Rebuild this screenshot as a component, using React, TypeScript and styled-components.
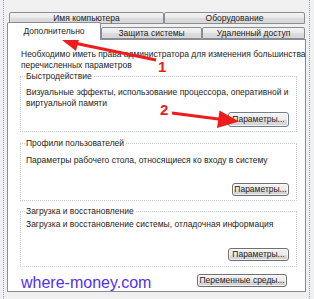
import styled, { createGlobalStyle } from 'styled-components';

const GlobalStyle = createGlobalStyle`
  html, body {
    margin: 0;
    padding: 0;
    background: #f0f0f0;
  }
  body {
    font-family: 'Liberation Sans', Arial, sans-serif;
    font-size: 8.5px;
    color: #1e1e1e;
  }
`;

const Outer = styled.div`
  position: relative;
  width: 314px;
  height: 299px;
  box-sizing: border-box;
  padding: 0 4px 0 3px;
  background: #eef0f3;
  overflow: hidden;
`;

const Frame = styled.div`
  height: 100%;
  box-sizing: border-box;
  border-left: 1px dotted #8e9cb2;
  border-right: 1px dotted #8e9cb2;
  padding: 11px 3px 7px 3px;
  background: #f0f0f0;
  display: flex;
  flex-direction: column;
`;

const TabRow = styled.div<{ front?: boolean }>`
  display: flex;
  align-items: flex-end;
  height: ${p => (p.front ? 15 : 13)}px;
  margin-left: ${p => (p.front ? 0 : 2)}px;
  margin-right: 1px;
`;

const Tab = styled.div<{ w?: number; selected?: boolean; h?: number }>`
  ${p => (p.w ? `width: ${p.w}px;` : 'flex: 1;')}
  height: ${p => p.h ?? 12}px;
  box-sizing: border-box;
  display: flex;
  align-items: center;
  justify-content: center;
  border: 1px solid #898c95;
  border-bottom: ${p => (p.selected ? 'none' : '1px solid #898c95')};
  border-radius: 2px 2px 0 0;
  background: ${p =>
    p.selected ? '#ffffff' : 'linear-gradient(#f3f3f3, #e9e9e9 50%, #dcdcdc 51%, #d7d7d7)'};
  margin-bottom: ${p => (p.selected ? -1 : 0)}px;
  position: ${p => (p.selected ? 'relative' : 'static')};
  z-index: ${p => (p.selected ? 2 : 0)};
  white-space: nowrap;
  line-height: 1;
  padding-top: ${p => (p.selected ? 0 : 1)}px;
`;

const Panel = styled.div`
  flex: 1;
  background: #ffffff;
  border: 1px solid #898c95;
  box-sizing: border-box;
  padding: 9px 8px 0 12px;
  display: flex;
  flex-direction: column;
  min-height: 0;
`;

const Intro = styled.div`
  line-height: 10.5px;
  padding-left: 1px;
  margin-bottom: 1px;
  white-space: nowrap;
`;

const Group = styled.fieldset<{ h: number; gap: number }>`
  margin: 0 0 ${p => p.gap}px 0;
  padding: 0 0 0 5px;
  border: 1px dotted #c3c9d2;
  height: ${p => p.h}px;
  box-sizing: border-box;
  display: flex;
  flex-direction: column;
  min-width: 0;
`;

const Legend = styled.legend`
  padding: 0 2px 0 0;
  margin-left: 0;
  line-height: 10px;
  white-space: nowrap;
`;

const GroupText = styled.div<{ top: number }>`
  margin-top: ${p => p.top}px;
  line-height: 10.5px;
  white-space: nowrap;
`;

const ButtonRow = styled.div<{ top: number }>`
  display: flex;
  justify-content: flex-end;
  margin-top: ${p => p.top}px;
  padding-right: 7px;
`;

const Button = styled.div<{ w: number; hot?: boolean }>`
  width: ${p => p.w}px;
  height: ${p => (p.hot ? 15 : 13)}px;
  box-sizing: border-box;
  border: 1px solid ${p => (p.hot ? '#6f7f93' : '#707070')};
  border-radius: 3px;
  background: ${p =>
    p.hot
      ? 'linear-gradient(#f4f4f4, #ececec 50%, #dedede 51%, #d2d2d2)'
      : 'linear-gradient(#f2f2f2, #ebebeb 50%, #dddddd 51%, #cfcfcf)'};
  box-shadow: inset 0 0 0 1px rgba(255, 255, 255, 0.7);
  display: flex;
  align-items: center;
  justify-content: center;
  white-space: nowrap;
  line-height: 1;
`;

const BottomRow = styled.div`
  display: flex;
  justify-content: space-between;
  align-items: flex-start;
  padding-right: 10px;
`;

const Watermark = styled.div`
  font-family: 'Liberation Sans', Arial, sans-serif;
  font-size: 16px;
  color: #5230f0;
  margin-left: 1px;
  margin-top: 1px;
  line-height: 16px;
`;

const Overlay = styled.svg`
  position: absolute;
  left: 0;
  top: 0;
  pointer-events: none;
`;

const Mark = styled.text`
  font-family: 'Liberation Sans', Arial, sans-serif;
  font-weight: bold;
  font-size: 15px;
  fill: #ee1c1c;
`;

function App() {
  return (
    <>
      <GlobalStyle />
      <Outer>
        <Frame>
          <TabRow>
            <Tab w={155}>Имя компьютера</Tab>
            <Tab>Оборудование</Tab>
          </TabRow>
          <TabRow front>
            <Tab w={94} h={18} selected>Дополнительно</Tab>
            <Tab w={101}>Защита системы</Tab>
            <Tab>Удаленный доступ</Tab>
          </TabRow>
          <Panel>
            <Intro>
              Необходимо иметь права администратора для изменения большинства
              <br />
              перечисленных параметров
            </Intro>
            <Group h={62} gap={6}>
              <Legend>Быстродействие</Legend>
              <GroupText top={6}>
                Визуальные эффекты, использование процессора, оперативной и
                <br />
                виртуальной памяти
              </GroupText>
              <ButtonRow top={4}>
                <Button w={61} hot>Параметры...</Button>
              </ButtonRow>
            </Group>
            <Group h={64} gap={5}>
              <Legend>Профили пользователей</Legend>
              <GroupText top={7}>
                Параметры рабочего стола, относящиеся ко входу в систему
              </GroupText>
              <ButtonRow top={17}>
                <Button w={57}>Параметры...</Button>
              </ButtonRow>
            </Group>
            <Group h={62} gap={7}>
              <Legend>Загрузка и восстановление</Legend>
              <GroupText top={3}>
                Загрузка и восстановление системы, отладочная информация
              </GroupText>
              <ButtonRow top={18}>
                <Button w={61}>Параметры...</Button>
              </ButtonRow>
            </Group>
            <BottomRow>
              <Watermark>where-money.com</Watermark>
              <Button w={90}>Переменные среды...</Button>
            </BottomRow>
          </Panel>
        </Frame>
        <Overlay width={314} height={299} viewBox="0 0 314 299">
          <line x1="156" y1="60" x2="74" y2="43" stroke="#ee1c1c" strokeWidth="3" />
          <polygon points="62,40 80,35.5 76,51" fill="#ee1c1c" />
          <line x1="172" y1="113" x2="222" y2="119.5" stroke="#ee1c1c" strokeWidth="3" />
          <polygon points="239,121.5 219.5,110.5 217,128" fill="#ee1c1c" />
          <Mark x="158" y="72">1</Mark>
          <Mark x="160" y="115">2</Mark>
        </Overlay>
      </Outer>
    </>
  );
}

export default App;
